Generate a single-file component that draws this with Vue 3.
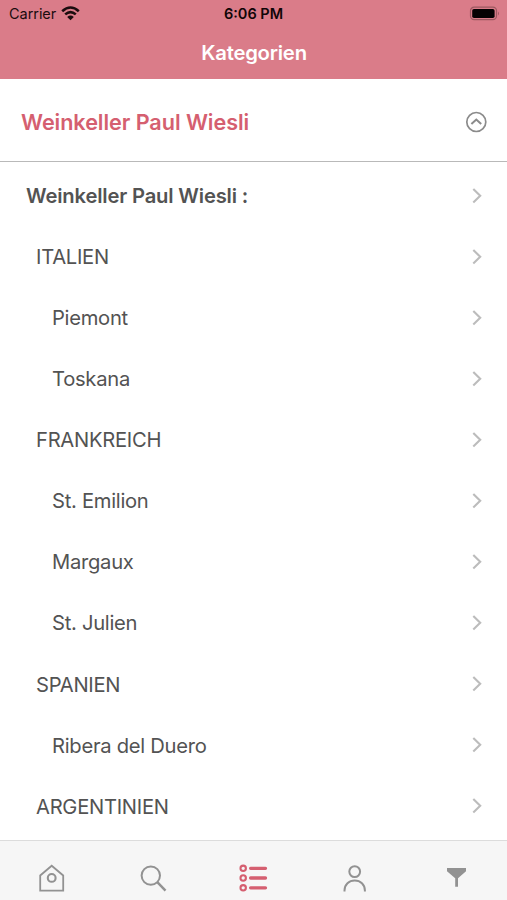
<script setup>
const categories = [
  { name: 'Weinkeller Paul Wiesli :', level: 'root' },
  { name: 'ITALIEN', level: 'country' },
  { name: 'Piemont', level: 'region' },
  { name: 'Toskana', level: 'region' },
  { name: 'FRANKREICH', level: 'country' },
  { name: 'St. Emilion', level: 'region' },
  { name: 'Margaux', level: 'region' },
  { name: 'St. Julien', level: 'region' },
  { name: 'SPANIEN', level: 'country' },
  { name: 'Ribera del Duero', level: 'region' },
  { name: 'ARGENTINIEN', level: 'country' },
]
</script>

<template>
  <div class="screen">
    <header class="header">
      <div class="status">
        <div class="carrier">
          <span>Carrier</span>
          <svg class="wifi" width="19" height="15" viewBox="0 0 19 15">
            <path d="M1.2 5.2Q9.5 -2.2 17.8 5.2M4.2 8.4Q9.5 3.7 14.8 8.4" fill="none" stroke="#1b0c0e" stroke-width="2.6" />
            <path d="M6.2 11Q9.5 8.2 12.8 11L9.5 14.3Z" fill="#1b0c0e" />
          </svg>
        </div>
        <span class="time">6:06 PM</span>
        <svg class="battery" width="32" height="16" viewBox="0 0 32 16">
          <rect x="1.5" y="1.2" width="26" height="12.5" rx="3.6" fill="none" stroke="#9c5860" stroke-width="1.2" />
          <rect x="3.2" y="3" width="22.4" height="9" rx="1.8" fill="#050203" />
          <path d="M29 5.4q1.9 2 0 4.1z" fill="#9c5860" />
        </svg>
      </div>
      <h1 class="heading">Kategorien</h1>
    </header>

    <section class="group">
      <h2 class="group-name">Weinkeller Paul Wiesli</h2>
      <svg width="22" height="22" viewBox="0 0 22 22" fill="none" stroke="#8b8b8b">
        <circle cx="11.3" cy="11" r="9.5" stroke-width="1.7" />
        <path d="M6.4 13L11.3 8.5L16.2 13" stroke-width="2" />
      </svg>
    </section>

    <ul class="list">
      <li v-for="item in categories" :key="item.name" class="row" :class="item.level">
        <span>{{ item.name }}</span>
        <svg width="10" height="16" viewBox="0 0 10 16">
          <path d="M1.3 1L8.2 7.7L1.3 14.4" fill="none" stroke="#bcbcbc" stroke-width="2.1" />
        </svg>
      </li>
    </ul>

    <nav class="tabs">
      <div class="tab">
        <svg width="30" height="30" viewBox="0 0 30 30" fill="none" stroke="#929292" stroke-width="1.8">
          <path d="M4.2 12.5L15.7 2.8L27.2 12.5V27.6H4.2Z" />
          <circle cx="15.7" cy="14.9" r="3.9" stroke-width="2.1" />
        </svg>
      </div>
      <div class="tab">
        <svg width="30" height="30" viewBox="0 0 30 30" fill="none" stroke="#929292" stroke-width="2">
          <circle cx="13.8" cy="12.6" r="9.2" />
          <path d="M20.3 19.1L28.5 27.7" stroke-width="2.4" />
        </svg>
      </div>
      <div class="tab">
        <svg width="30" height="30" viewBox="0 0 30 30" fill="none" stroke="#d55f70">
          <g stroke-width="2.1">
            <circle cx="5.2" cy="5.3" r="2.7" />
            <circle cx="5.2" cy="15" r="2.7" />
            <circle cx="5.2" cy="24.8" r="2.7" />
          </g>
          <path d="M12.6 5.3H27.5M12.6 15H27.5M12.6 24.8H27.5" stroke-width="3.3" stroke-linecap="round" />
        </svg>
      </div>
      <div class="tab">
        <svg width="30" height="30" viewBox="0 0 30 30" fill="none" stroke="#929292" stroke-width="2">
          <circle cx="14.7" cy="8.6" r="5.4" />
          <path d="M4.5 28.5V27.6C4.5 21.5 9 17.5 14.7 17.5S24.9 21.5 24.9 27.6V28.5" />
        </svg>
      </div>
      <div class="tab">
        <svg width="30" height="30" viewBox="0 0 30 30">
          <path d="M6 5H25V8.3L17 15.2V23.7H14.2V15.2L6 8.3Z" fill="#929292" />
        </svg>
      </div>
    </nav>
  </div>
</template>

<style>
body {
  background: #fff;
}
</style>

<style scoped>
.screen {
  height: 900px;
  display: flex;
  flex-direction: column;
  overflow: hidden;
  background: #fff;
  color: #535353;
  font-family: Inter, "Liberation Sans", sans-serif;
}
h1,
h2,
ul {
  margin: 0;
  padding: 0;
}
svg {
  display: block;
  flex: none;
}
.header {
  flex: none;
  height: 79px;
  background: #da7c89;
}
.status {
  display: grid;
  grid-template-columns: 1fr auto 1fr;
  align-items: center;
  height: 27px;
  padding: 0 6px 0 9px;
  color: #1b0c0e;
  font-size: 14.5px;
}
.carrier {
  display: flex;
  align-items: center;
  gap: 5px;
  letter-spacing: -0.05px;
}
.wifi {
  margin-top: -1px;
}
.time {
  margin: 0 1.5px 0 -1.5px;
  color: #100507;
  font-weight: 600;
}
.battery {
  justify-self: end;
}
.heading {
  padding-left: 1px;
  line-height: 51px;
  text-align: center;
  color: #fff;
  font-size: 20.3px;
  font-weight: 600;
  letter-spacing: -0.22px;
}
.group {
  flex: none;
  display: flex;
  align-items: center;
  justify-content: space-between;
  height: 78px;
  padding: 4px 20px 0 21px;
  border-bottom: 1px solid #b9b9b9;
}
.group-name {
  color: #d55f70;
  font-size: 21.6px;
  font-weight: 600;
  letter-spacing: -0.05px;
}
.list {
  flex: 1;
  min-height: 0;
  padding-top: 3px;
  list-style: none;
}
.row {
  display: flex;
  align-items: center;
  justify-content: space-between;
  height: 61.07px;
  padding-right: 25px;
  font-size: 20.2px;
  letter-spacing: -0.28px;
}
.root {
  padding-left: 26px;
  font-weight: 600;
  letter-spacing: -0.16px;
}
.country {
  padding-left: 36px;
}
.region {
  padding-left: 52px;
}
.tabs {
  flex: none;
  display: grid;
  grid-template-columns: repeat(5, 1fr);
  height: 59px;
  border-top: 1px solid #dcdcdc;
  background: #f6f6f6;
}
.tab {
  display: flex;
  justify-content: center;
  padding-top: 22px;
}
</style>
